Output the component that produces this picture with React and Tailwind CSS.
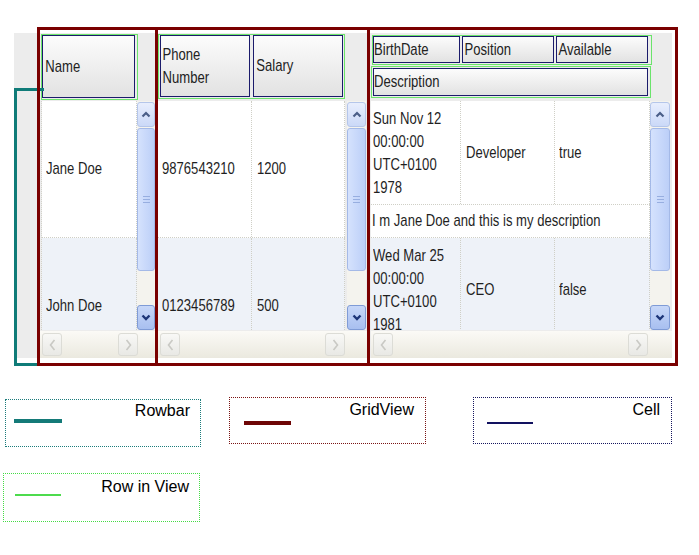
import React from "react";

const T = "inline-block origin-left scale-x-[0.77] whitespace-nowrap";
const ML = "origin-left scale-x-[0.77] whitespace-nowrap leading-[23px]";

function Up() {
  return (
    <svg width="10" height="7" viewBox="0 0 10 7">
      <polyline points="1.5,5.5 5,2 8.5,5.5" fill="none" stroke="#4b5f88" strokeWidth="2.2" />
    </svg>
  );
}

function Down() {
  return (
    <svg width="10" height="7" viewBox="0 0 10 7">
      <polyline points="1.5,1.5 5,5 8.5,1.5" fill="none" stroke="#1d3578" strokeWidth="2.4" />
    </svg>
  );
}

function Left() {
  return (
    <svg width="7" height="12" viewBox="0 0 7 12">
      <polyline points="5.5,1 1.5,6 5.5,11" fill="none" stroke="#c9c9c4" strokeWidth="1.6" />
    </svg>
  );
}

function Right() {
  return (
    <svg width="7" height="12" viewBox="0 0 7 12">
      <polyline points="1.5,1 5.5,6 1.5,11" fill="none" stroke="#c9c9c4" strokeWidth="1.6" />
    </svg>
  );
}

function VScroll() {
  return (
    <div className="flex h-full w-full flex-col bg-[#f4f3ee]">
      <div className="mt-[1px] flex h-[25px] items-center justify-center rounded-[3px] border border-[#b5c6ea] bg-linear-to-b from-[#e8eefd] to-[#cbd9f8]">
        <Up />
      </div>
      <div className="mt-[1px] flex h-[143px] flex-col items-center justify-center gap-[2px] rounded-[3px] border border-[#a4b9e7] bg-linear-to-r from-[#d5e2fd] to-[#bccff8]">
        <div className="h-px w-[7px] bg-[#97aee0]" />
        <div className="h-px w-[7px] bg-[#97aee0]" />
        <div className="h-px w-[7px] bg-[#97aee0]" />
      </div>
      <div className="flex-1" />
      <div className="flex h-[25px] items-center justify-center rounded-[3px] border border-[#7f9bd6] bg-linear-to-b from-[#c7d7f8] to-[#a8bff0]">
        <Down />
      </div>
    </div>
  );
}

function HBtn({ children }) {
  return (
    <div className="flex h-[23px] w-[20px] items-center justify-center rounded-[3px] border border-[#dcdcd6] bg-linear-to-b from-[#f8f8f6] to-[#e9e9e5]">
      {children}
    </div>
  );
}

function Head({ children }) {
  return (
    <div className="flex h-full items-center border border-[#1b1b6b] bg-linear-to-b from-[#fcfcfc] to-[#e2e2e2] text-[#222]">
      {children}
    </div>
  );
}

function Legend({ children }) {
  return <div className="flex items-start justify-between">{children}</div>;
}

export default function App() {
  return (
    <div className="h-[555px] w-[699px] overflow-hidden bg-white font-['Liberation_Sans',Arial,sans-serif] text-[17px] text-[#1f1f1f]">
      {/* grid diagram */}
      <div className="relative h-[397px] pl-[14px] pt-[33px]">
        <div className="flex h-[325px] w-[658px] bg-[#ececec]">
          {/* rowbar column */}
          <div className="w-[26px]" />

          {/* frozen section */}
          <div className="flex w-[115px] flex-col">
            <div className="h-[68px] pl-[1px] pt-[1px]">
              <div className="h-[66px] w-[97px] border border-[#6be46b] pb-[1px] pr-[2px]">
                <Head>
                  <span className={`${T} pl-[3px]`}>Name</span>
                </Head>
              </div>
            </div>
            <div className="flex h-[229px]">
              <div className="ml-[1px] w-[96px] overflow-hidden border-l border-dotted border-[#d2d2ca]">
                <div className="flex h-[137px] items-center border-r border-b border-dotted border-[#cfcfc6] bg-white pl-[4px]">
                  <span className={T}>Jane Doe</span>
                </div>
                <div className="flex h-[136px] items-center border-r border-dotted border-[#cfcfc6] bg-[#eef2f8] pl-[4px]">
                  <span className={T}>John Doe</span>
                </div>
              </div>
              <div className="w-[18px]">
                <VScroll />
              </div>
            </div>
            <div className="mt-[1px] flex h-[27px] items-center bg-linear-to-b from-[#fbfaf6] to-[#ebe9df] pl-[2px]">
              <HBtn><Left /></HBtn>
              <div className="w-[56px]" />
              <HBtn><Right /></HBtn>
            </div>
          </div>

          <div className="w-[3px]" />

          {/* scrollable section */}
          <div className="flex w-[209px] flex-col">
            <div className="h-[68px] pt-[1px]">
              <div className="flex h-[65px] w-[187px] gap-[3px] border border-[#6be46b] pb-[1px] pl-[1px]">
                <div className="w-[90px]">
                  <Head>
                    <div className={`${ML} pl-[2px] leading-[22px]`}>
                      <div>Phone</div>
                      <div>Number</div>
                    </div>
                  </Head>
                </div>
                <div className="w-[90px]">
                  <Head>
                    <span className={`${T} pl-[3px]`}>Salary</span>
                  </Head>
                </div>
              </div>
            </div>
            <div className="flex h-[229px]">
              <div className="w-[187px] overflow-hidden">
                <div className="flex h-[137px] border-b border-dotted border-[#cfcfc6] bg-white">
                  <div className="flex w-[94px] items-center border-r border-dotted border-[#cfcfc6] pl-[4px]">
                    <span className={T}>9876543210</span>
                  </div>
                  <div className="flex w-[93px] items-center border-r border-dotted border-[#cfcfc6] pl-[5px]">
                    <span className={T}>1200</span>
                  </div>
                </div>
                <div className="flex h-[136px] bg-[#eef2f8]">
                  <div className="flex w-[94px] items-center border-r border-dotted border-[#cfcfc6] pl-[4px]">
                    <span className={T}>0123456789</span>
                  </div>
                  <div className="flex w-[93px] items-center border-r border-dotted border-[#cfcfc6] pl-[5px]">
                    <span className={T}>500</span>
                  </div>
                </div>
              </div>
              <div className="w-[2px]" />
              <div className="w-[19px]">
                <VScroll />
              </div>
            </div>
            <div className="mt-[1px] flex h-[27px] items-center bg-linear-to-b from-[#fbfaf6] to-[#ebe9df] pl-[2px]">
              <HBtn><Left /></HBtn>
              <div className="w-[145px]" />
              <HBtn><Right /></HBtn>
            </div>
          </div>

          <div className="w-[4px]" />

          {/* detail section */}
          <div className="flex w-[301px] flex-col">
            <div className="h-[68px] pt-[2px]">
              <div className="ml-[1px] flex h-[30px] w-[280px] gap-[2px] border border-[#6be46b] pb-[1px]">
                <div className="w-[87px]">
                  <Head><span className={T}>BirthDate</span></Head>
                </div>
                <div className="w-[92px]">
                  <Head><span className={`${T} pl-[2px]`}>Position</span></Head>
                </div>
                <div className="w-[92px]">
                  <Head><span className={`${T} pl-[2px]`}>Available</span></Head>
                </div>
              </div>
              <div className="mt-[1px] h-[32px] w-[280px] border border-[#6be46b] pl-[1px] pt-[1px]">
                <div className="h-[28px] w-[275px]">
                  <Head><span className={T}>Description</span></Head>
                </div>
              </div>
            </div>
            <div className="flex h-[229px]">
              <div className="w-[279px] overflow-hidden">
                <div className="bg-white">
                  <div className="flex h-[104px] border-b border-dotted border-[#cfcfc6]">
                    <div className="flex w-[90px] items-center border-r border-dotted border-[#cfcfc6] pl-[2px]">
                      <div className={ML}>
                        <div>Sun Nov 12</div>
                        <div>00:00:00</div>
                        <div>UTC+0100</div>
                        <div>1978</div>
                      </div>
                    </div>
                    <div className="flex w-[94px] items-center border-r border-dotted border-[#cfcfc6] pl-[5px]">
                      <span className={T}>Developer</span>
                    </div>
                    <div className="flex w-[95px] items-center border-r border-dotted border-[#cfcfc6] pl-[4px]">
                      <span className={T}>true</span>
                    </div>
                  </div>
                  <div className="flex h-[33px] items-center border-r border-b border-dotted border-[#cfcfc6] pl-[1px]">
                    <span className={T}>I m Jane Doe and this is my description</span>
                  </div>
                </div>
                <div className="bg-[#eef2f8]">
                  <div className="flex h-[104px] border-b border-dotted border-[#cfcfc6]">
                    <div className="flex w-[90px] items-center border-r border-dotted border-[#cfcfc6] pl-[2px]">
                      <div className={ML}>
                        <div>Wed Mar 25</div>
                        <div>00:00:00</div>
                        <div>UTC+0100</div>
                        <div>1981</div>
                      </div>
                    </div>
                    <div className="flex w-[94px] items-center border-r border-dotted border-[#cfcfc6] pl-[5px]">
                      <span className={T}>CEO</span>
                    </div>
                    <div className="flex w-[95px] items-center border-r border-dotted border-[#cfcfc6] pl-[4px]">
                      <span className={T}>false</span>
                    </div>
                  </div>
                  <div className="h-[33px]" />
                </div>
              </div>
              <div className="w-[20px]">
                <VScroll />
              </div>
            </div>
            <div className="mt-[1px] flex h-[27px] items-center bg-linear-to-b from-[#fbfaf6] to-[#ebe9df] pl-[2px]">
              <HBtn><Left /></HBtn>
              <div className="w-[235px]" />
              <HBtn><Right /></HBtn>
            </div>
          </div>
        </div>

        {/* annotation overlays */}
        <div className="pointer-events-none absolute left-[14px] top-[88px] h-[278px] w-[30px] border-t-[3px] border-b-[3px] border-l-[3px] border-[#0f7b78]" />
        <div className="pointer-events-none absolute left-[37px] top-[27px] h-[339px] w-[121px] border-[3px] border-[#7a0000]" />
        <div className="pointer-events-none absolute left-[155px] top-[27px] h-[339px] w-[215px] border-[3px] border-[#7a0000]" />
        <div className="pointer-events-none absolute left-[367px] top-[27px] h-[339px] w-[311px] border-[3px] border-[#7a0000]" />
      </div>

      {/* legend */}
      <div className="flex items-start">
        <div className="ml-[5px] mt-[2px] h-[48px] w-[196px] border border-dotted border-[#1b7b7b] pl-[8px] pr-[10px]">
          <Legend>
            <div className="mt-[19px] h-[4px] w-[48px] bg-[#147a78]" />
            <span className="mt-[2px] leading-[18px] text-[16px] text-black">Rowbar</span>
          </Legend>
        </div>
        <div className="ml-[28px] h-[47px] w-[197px] border border-dotted border-[#7a1414] pl-[14px] pr-[11px]">
          <Legend>
            <div className="mt-[23px] h-[4px] w-[47px] bg-[#6e0606]" />
            <span className="mt-[3px] leading-[18px] text-[16px] text-black">GridView</span>
          </Legend>
        </div>
        <div className="ml-[47px] h-[47px] w-[199px] border border-dotted border-[#16165e] pl-[13px] pr-[11px]">
          <Legend>
            <div className="mt-[24px] h-[1.5px] w-[46px] bg-[#121260]" />
            <span className="mt-[3px] leading-[18px] text-[16px] text-black">Cell</span>
          </Legend>
        </div>
      </div>
      <div className="ml-[3px] mt-[26px] h-[49px] w-[197px] border border-dotted border-[#45dc45] pl-[11px] pr-[10px]">
        <Legend>
          <div className="mt-[20px] h-[1.5px] w-[46px] bg-[#4ddb4d]" />
          <span className="mt-[4px] leading-[18px] text-[16px] text-black">Row in View</span>
        </Legend>
      </div>
    </div>
  );
}
